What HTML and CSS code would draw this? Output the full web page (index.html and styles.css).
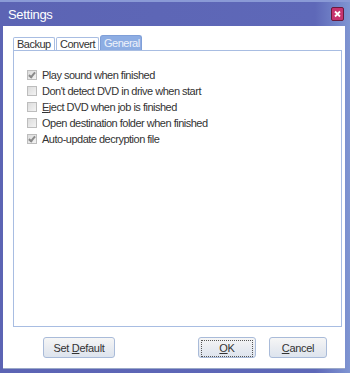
FILE: index.html
```html
<!DOCTYPE html>
<html>
<head>
    <title>Settings</title>
    <link rel="stylesheet" href="styles.css">
</head>
<body>
    <div class="window">
        <div class="titlebar">
            <span class="title">Settings</span>
            <span class="close">
                <svg width="13" height="14" viewBox="0 0 13 14">
                    <rect x="0.5" y="0.5" width="12" height="13" rx="1.5" fill="#c6336f" stroke="#6a1a3c"/>
                    <path d="M4 4.5 L9 9.5 M9 4.5 L4 9.5" stroke="#fff" stroke-width="1.8"/>
                </svg>
            </span>
        </div>

        <div class="client">
            <div class="tabs">
                <div class="tab">Backup</div>
                <div class="tab">Convert</div>
                <div class="tab active">General</div>
            </div>

            <div class="panel">
                <label class="option"><span class="check on"></span>Play sound when finished</label>
                <label class="option"><span class="check"></span>Don't detect DVD in drive when start</label>
                <label class="option"><span class="check"></span><u>E</u>ject DVD when job is finished</label>
                <label class="option"><span class="check"></span>Open destination folder when finished</label>
                <label class="option"><span class="check on"></span>Auto-update decryption file</label>
            </div>

            <div class="buttons">
                <button class="btn wide">Set <u>D</u>efault</button>
                <div class="right">
                    <button class="btn focus"><span><u>O</u>K</span></button>
                    <button class="btn"><u>C</u>ancel</button>
                </div>
            </div>
        </div>
    </div>
</body>
</html>
```

FILE: styles.css
```css
body {
    margin: 0;
    font-family: "Liberation Sans", Arial, sans-serif;
    font-size: 11px;
    letter-spacing: -0.5px;
    color: #333;
}

.window {
    width: 350px;
    height: 373px;
    display: flex;
    flex-direction: column;
    background: linear-gradient(to right, #5c64b4 0%, #5e68b8 90%, #7f95d2 100%);
    border-top: 2px solid #8a9ad6;
    box-sizing: border-box;
}

.titlebar {
    height: 24px;
    display: flex;
    align-items: center;
    justify-content: space-between;
    padding: 0 6px 0 8px;
}

.title {
    color: #fff;
    font-size: 13px;
    letter-spacing: -0.3px;
}

.close svg {
    display: block;
}

.client {
    flex: 1;
    margin: 0 5px 4px 3px;
    background: #fff;
    display: flex;
    flex-direction: column;
    border-bottom: 1px solid #9aa8c8;
}

.tabs {
    display: flex;
    align-items: flex-end;
    margin: 9px 0 0 10px;
    height: 15px;
}

.tab {
    height: 12px;
    line-height: 12px;
    padding: 0 3px;
    margin-right: 1px;
    border: 1px solid #a8bde2;
    border-bottom: none;
    border-radius: 2px 2px 0 0;
    background: #fff;
}

.tab:nth-child(1) { width: 34px; }
.tab:nth-child(2) { width: 35px; }

.tab.active {
    width: 34px;
    height: 14px;
    line-height: 15px;
    background: #8dade3;
    border-color: #7f9fd8;
    color: #eef2fb;
    border-radius: 3px 3px 0 0;
}

.panel {
    height: 259px;
    margin: 0 3px 0 10px;
    padding: 16px 0 0 13px;
    border: 1px solid #a8bde2;
}

.option {
    display: flex;
    align-items: center;
    height: 16px;
}

.check {
    width: 8px;
    height: 8px;
    margin-right: 5px;
    border: 1px solid #bdbdbd;
    background: linear-gradient(135deg, #dcdcdc, #f3f3f3);
    position: relative;
}

.check.on::after {
    content: "";
    position: absolute;
    left: 2px;
    top: 0px;
    width: 2px;
    height: 5px;
    border: solid #8a8a8a;
    border-width: 0 2px 2px 0;
    transform: rotate(40deg);
}

.buttons {
    display: flex;
    justify-content: space-between;
    margin: 10px 0 0 40px;
    padding-right: 18px;
}

.right {
    display: flex;
    gap: 13px;
}

.btn {
    width: 58px;
    height: 21px;
    padding: 0;
    font-family: inherit;
    font-size: 11px;
    letter-spacing: -0.3px;
    color: #333;
    border: 1px solid #a9bbd9;
    border-radius: 3px;
    background: linear-gradient(#f6f6f6, #e9ecf1 50%, #dde4ee);
}

.btn.wide {
    width: 72px;
}

.btn.focus span {
    display: block;
    margin: 2px;
    height: 15px;
    line-height: 15px;
    border: 1px dotted #555;
}
```
